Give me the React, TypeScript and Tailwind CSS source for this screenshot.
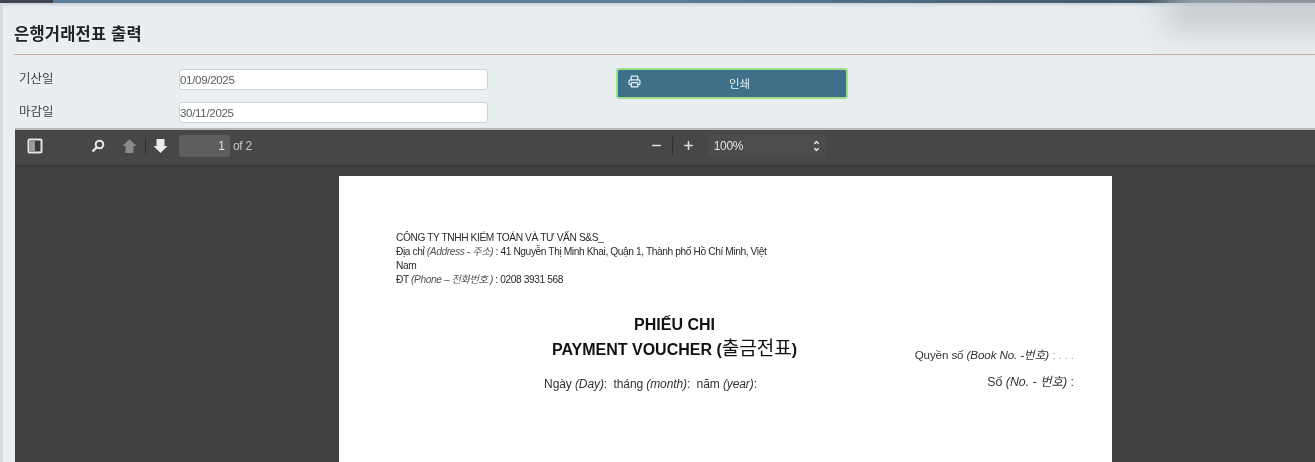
import { ChevronDown, ChevronUp, Minus, Plus, Printer } from 'lucide-react'

const sans = "font-['Liberation_Sans','Noto_Sans_CJK_KR',sans-serif]"

function PageHeader() {
  return (
    <div className="flex h-[52px] items-end border-b border-[#cfa898] pb-[12px]">
      <h1 className="text-[16.5px] leading-none font-bold tracking-[0.2px] text-[#1c2226]">은행거래전표 출력</h1>
    </div>
  )
}

function DateField({ label, value }: { label: string; value: string }) {
  return (
    <div className="flex h-[21px] items-center">
      <label className="w-[165px] pl-[5px] text-[12.5px] text-[#3d4448]">{label}</label>
      <input
        readOnly
        value={value}
        className="h-[21px] w-[309px] rounded-[3px] border border-[#cdd3d6] bg-white pl-[0px] text-[11.5px] tracking-[-0.3px] text-[#555c60] outline-none"
      />
    </div>
  )
}

function FilterForm() {
  return (
    <div className="flex h-[73px] pt-[14px]">
      <div className="flex w-[475px] flex-col gap-[12px]">
        <DateField label="기산일" value="01/09/2025" />
        <DateField label="마감일" value="30/11/2025" />
      </div>
      <button className="relative mt-[-1px] ml-[127px] flex h-[31px] w-[232px] items-center justify-center rounded-[3px] border-2 border-[#9fe08f] bg-[#3e7189] pt-[2px] pl-[15px] text-[11.5px] text-[#e8f0f3]">
        <Printer size={13} strokeWidth={2.2} className="absolute top-[5px] left-[10px]" />
        인쇄
      </button>
    </div>
  )
}

function PanelIcon() {
  return (
    <svg width="16" height="16" viewBox="0 0 16 16">
      <rect x="1.5" y="1.5" width="13" height="13" rx="1" fill="#3a3a3a" stroke="#e4e4e4" strokeWidth="2" />
      <rect x="3" y="3" width="3.5" height="10" fill="#9a9a9a" />
      <rect x="6.5" y="3" width="1" height="10" fill="#e4e4e4" />
    </svg>
  )
}

function SearchIcon() {
  return (
    <svg width="14" height="14" viewBox="0 0 14 14" fill="none" stroke="#e8e8e8">
      <circle cx="8.5" cy="5.5" r="3.8" strokeWidth="2" />
      <path d="M5.5 8.5 1.5 12.5" strokeWidth="2.4" />
    </svg>
  )
}

function ArrowIcon({ down, color }: { down?: boolean; color: string }) {
  return (
    <svg width="15" height="16" viewBox="0 0 15 16" className={down ? 'rotate-180' : ''}>
      <path d="M7.5 1 14.5 8H11.5V15H3.5V8H.5Z" fill={color} />
    </svg>
  )
}

function ViewerToolbar() {
  return (
    <div className="flex h-[37px] shrink-0 items-center border-t-2 border-[#b5b8ba] bg-[#474747] pb-[4px] shadow-[0_1px_0_#333]">
      <div className="ml-[12px] flex w-[64px] items-center">
        <PanelIcon />
      </div>
      <SearchIcon />
      <div className="ml-[17px] flex items-center">
        <ArrowIcon color="#8a8a8a" />
        <div className="mr-[7px] ml-[8px] h-[16px] w-px bg-[#2f2f2f]" />
        <ArrowIcon down color="#ececec" />
      </div>
      <div className="ml-[11px] flex h-[22px] w-[51px] items-center justify-end rounded-[2px] bg-[#5e5e5e] pr-[5px] text-[12px] text-[#e4e4e4]">
        1
      </div>
      <span className="ml-[3px] text-[12px] tracking-[-0.3px] text-[#c8c8c8]">of 2</span>
      <div className="ml-[398px] flex items-center text-[#e0e0e0]">
        <Minus size={13} strokeWidth={3} />
        <div className="mx-[9px] h-[18px] w-px bg-[#2f2f2f]" />
        <Plus size={13} strokeWidth={3} />
      </div>
      <div className="ml-[13px] flex h-[23px] w-[118px] items-center justify-between rounded-[2px] bg-[#4c4c4c] pr-[6px] pl-[6px] text-[12px] tracking-[-0.4px] text-[#e4e4e4]">
        100%
        <span className="flex flex-col text-[#e0e0e0]">
          <ChevronUp size={7} strokeWidth={5} />
          <ChevronDown size={7} strokeWidth={5} />
        </span>
      </div>
    </div>
  )
}

function VoucherPage() {
  return (
    <div className={`ml-[324px] flex h-[286px] w-[773px] flex-col bg-white pt-[55px] text-[#2b2b2b] ${sans}`}>
      <div className="ml-[57px] w-[380px] text-[10.2px] leading-[14px] tracking-[-0.4px]">
        <div>CÔNG TY TNHH KIỂM TOÁN VÀ TƯ VẤN S&amp;S_</div>
        <div>
          Địa chỉ <i className="text-[#555]">(Address - 주소)</i> : 41 Nguyễn Thị Minh Khai, Quận 1, Thành phố Hồ Chí Minh, Việt Nam
        </div>
        <div>
          ĐT <i className="text-[#555]">(Phone – 전화번호 )</i> : 0208 3931 568
        </div>
      </div>
      <div className="relative mt-[26px] flex flex-col items-center pr-[102px] text-[#111]">
        <div className="text-[16px] leading-[24px] font-bold">PHIẾU CHI</div>
        <div className="text-[16px] leading-[24px] font-bold">
          PAYMENT VOUCHER (<span className="text-[19px] font-normal">출금전표</span>)
        </div>
        <div className="mt-[14px] mr-[48px] text-[12px] leading-[16px] tracking-[-0.1px] text-[#333]">
          Ngày <i>(Day)</i>:&nbsp; tháng <i>(month)</i>:&nbsp; năm <i>(year)</i>:
        </div>
        <div className="absolute top-[34px] right-[38px] flex flex-col items-end gap-[11px] leading-[16px] text-[#333]">
          <div className="text-[11.6px] tracking-[-0.1px]">
            Quyền số <i>(Book No. -번호)</i> <span className="text-[#aaa]">: . . .</span>
          </div>
          <div className="text-[12.4px]">
            Số <i>(No. - 번호)</i> :
          </div>
        </div>
      </div>
    </div>
  )
}

export default function App() {
  return (
    <div className={`relative flex h-[462px] w-[1315px] flex-col overflow-hidden bg-[#e9eef1] blur-[0.6px] ${sans}`}>
      <div className="flex h-[3px] shrink-0 bg-gradient-to-r from-[#5a7f9c] via-[#5a7f9c] to-[#3a4a55] shadow-[0_2px_3px_#c5ced5]">
        <div className="w-[53px] bg-[#3d4650]" />
      </div>
      <div className="pointer-events-none absolute top-[-6px] right-[-30px] h-[34px] w-[180px] bg-[#bfc4c8] blur-lg" />
      <div className="flex min-h-0 flex-1 flex-col border-l-[3px] border-[#d5dade] pl-[11px]">
        <PageHeader />
        <FilterForm />
        <div className="ml-[1px] flex min-h-0 flex-1 flex-col bg-[#404040]">
          <ViewerToolbar />
          <div className="flex-1 pt-[11px]">
            <VoucherPage />
          </div>
        </div>
      </div>
    </div>
  )
}
